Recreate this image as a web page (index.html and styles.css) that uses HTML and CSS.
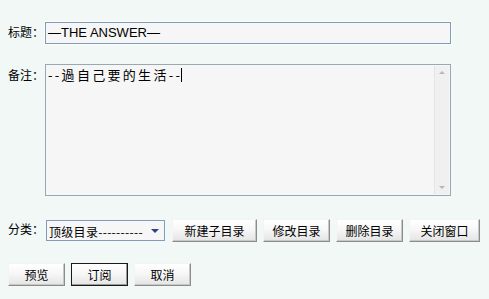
FILE: index.html
```html
<!DOCTYPE html>
<html lang="zh">
<head>
<meta charset="utf-8">
<title>目录</title>
<link rel="stylesheet" href="styles.css">
</head>
<body>
<form class="form">
  <div class="row row-title">
    <label class="label">标题：</label>
    <div class="field-input">—THE ANSWER—</div>
  </div>
  <div class="row row-note">
    <label class="label">备注：</label>
    <div class="field-area">
      <div class="area-text">--過自己要的生活--<span class="caret"></span></div>
      <div class="scrollbar">
        <span class="arrow up"></span>
        <span class="arrow down"></span>
      </div>
    </div>
  </div>
  <div class="row row-cat">
    <label class="label">分类：</label>
    <div class="select">
      <span class="select-text">顶级目录----------</span>
      <span class="select-arrow"></span>
    </div>
    <button type="button" class="btn btn-w85">新建子目录</button>
    <button type="button" class="btn btn-w67">修改目录</button>
    <button type="button" class="btn btn-w67">删除目录</button>
    <button type="button" class="btn btn-w71">关闭窗口</button>
  </div>
  <div class="row row-actions">
    <button type="button" class="btn btn-sm">预览</button>
    <button type="button" class="btn btn-sm btn-default">订阅</button>
    <button type="button" class="btn btn-sm">取消</button>
  </div>
</form>
</body>
</html>
```

FILE: styles.css
```css
html, body {
  margin: 0;
  padding: 0;
  background: #f1f8f6;
}
body {
  font-family: "Noto Sans CJK SC", "DejaVu Sans", sans-serif;
  font-size: 12px;
  color: #000;
}
.form {
  padding: 21px 0 0 8px;
  display: flex;
  flex-direction: column;
}
.row {
  display: flex;
  align-items: flex-start;
}
.label {
  width: 37px;
  flex: none;
  line-height: 16px;
}
.row-title .label { margin-top: 3px; }
.field-input {
  box-sizing: border-box;
  width: 406px;
  height: 22px;
  margin-top: 1px;
  border: 1px solid #7f9db9;
  background: #f6f6f6;
  font-family: "Liberation Sans", Arial, sans-serif;
  font-size: 13px;
  line-height: 19px;
  padding: 0 2px;
  box-shadow: 0 0 0 1px #fbfdfd;
}
.row-note { margin-top: 20px; }
.row-note .label { margin-top: 3px; }
.field-area {
  box-sizing: border-box;
  width: 406px;
  height: 132px;
  border: 1px solid #9aa8b0;
  background: #f6f6f6;
  display: flex;
}
.area-text {
  flex: 1;
  padding: 2px 2px;
  font-size: 13px;
  line-height: 16px;
  letter-spacing: 2.3px;
}
.caret {
  display: inline-block;
  width: 1px;
  height: 14px;
  background: #000;
  vertical-align: -2px;
  margin-left: -1px;
}
.scrollbar {
  width: 14px;
  margin: 1px 1px 1px 0;
  background: #f0f0f0;
  border-left: 1px solid #e4e4e4;
  display: flex;
  flex-direction: column;
  justify-content: space-between;
  align-items: center;
  padding: 5px 0;
}
.arrow {
  width: 0;
  height: 0;
  border-left: 3px solid transparent;
  border-right: 3px solid transparent;
}
.arrow.up { border-bottom: 3px solid #b8b8b8; }
.arrow.down { border-top: 3px solid #b8b8b8; }
.row-cat { margin-top: 23px; align-items: center; }
.row-cat .label { margin-top: -4px; }
.select {
  box-sizing: border-box;
  width: 119px;
  height: 21px;
  margin-left: 1px;
  border: 1px solid #7f9db9;
  background: #f6f6f6;
  display: flex;
  align-items: center;
  padding: 0 3px 0 2px;
}
.select-text { flex: 1; line-height: 16px; margin-top: 2px; letter-spacing: 0.3px; }
.select-arrow {
  width: 0;
  height: 0;
  border-left: 4px solid transparent;
  border-right: 4px solid transparent;
  border-top: 4px solid #2b3f8c;
  margin-right: 2px;
}
.btn {
  box-sizing: border-box;
  height: 23px;
  margin: 0 0 0 6px;
  padding: 0;
  font-family: "Noto Sans CJK SC", sans-serif;
  font-size: 12px;
  color: #000;
  background: linear-gradient(#ffffff 0%, #f7f7f7 45%, #e4e4e4 100%);
  border: 1px solid;
  border-color: #f4f4f4 #8c8c8c #8c8c8c #f4f4f4;
  box-shadow: inset -1px -1px 0 #c8c8c8;
  cursor: default;
}
.btn-w85 { width: 85px; margin-left: 7px; }
.btn-w67 { width: 67px; }
.btn-w71 { width: 71px; }
.row-actions { margin-top: 21px; }
.btn-sm { width: 57px; }
.row-actions .btn:first-child { margin-left: 0; }
.btn-default {
  border: 1px solid #1a1a1a;
  box-shadow: inset -1px -1px 0 #9a9a9a;
}
```
